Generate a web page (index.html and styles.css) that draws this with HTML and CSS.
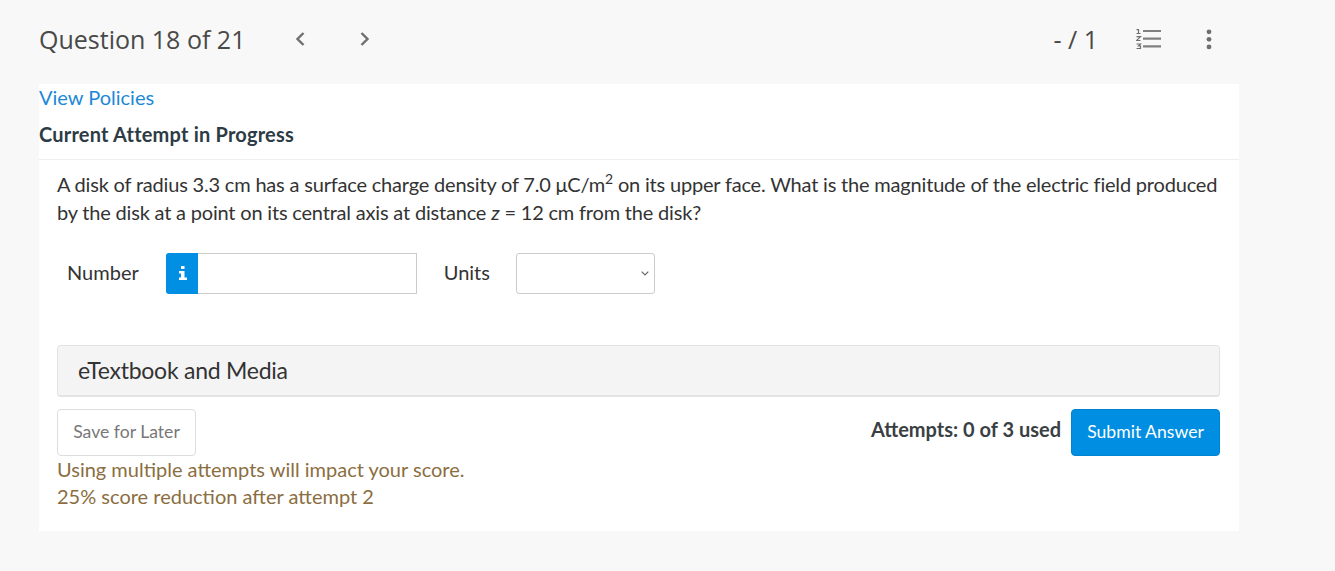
FILE: index.html
```html
<!DOCTYPE html>
<html lang="en">
<head>
    <meta charset="utf-8">
    <title>Question 18 of 21</title>
    <link rel="stylesheet" href="styles.css">
</head>

<body>
    <main class="page">
        <header class="top-bar">
            <h1 class="question-title">Question 18 of 21</h1>
            <nav class="pager">
                <svg class="pager-icon" viewBox="0 0 10 14" width="10" height="14"><path d="M8.500 1 L2.500 7 L8.500 13"/></svg>
                <svg class="pager-icon" viewBox="0 0 10 14" width="10" height="14"><path d="M1.500 1 L7.500 7 L1.500 13"/></svg>
            </nav>
            <div class="top-tools">
                <span class="score">- / 1</span>
                <svg class="list-icon" viewBox="0 0 25 20" width="25" height="20">
                    <path class="list-num" d="M0.500 0.600 H2.500 V4.500 M0.500 4.500 H4.500 M0.500 7.600 H4.500 L0.500 11.500 H4.500 M0.500 15 H4.500 L2.500 17 H4.500 V19.500 H0.500"/>
                    <path class="list-line" d="M7 2 H25 M7 9.700 H25 M7 17.300 H25"/>
                </svg>
                <svg class="dots-icon" viewBox="0 0 6 21" width="6" height="21">
                    <circle cx="3" cy="2.800" r="2.400"/>
                    <circle cx="3" cy="10.300" r="2.400"/>
                    <circle cx="3" cy="17.900" r="2.400"/>
                </svg>
            </div>
        </header>

        <section class="panel">
            <div class="panel-head">
                <a class="policies" href="#">View Policies</a>
                <h2 class="attempt-title">Current Attempt in Progress</h2>
            </div>
            <div class="panel-body">
                <p class="question">A disk of radius 3.3 cm has a surface charge density of 7.0 μC/m<sup>2</sup> on its upper face. What is the magnitude of the electric field produced by the disk at a point on its central axis at distance <em>z</em> = 12 cm from the disk?</p>

                <div class="answer-row">
                    <label class="answer-label">Number</label>
                    <div class="number-group">
                        <span class="info-box">
                            <svg viewBox="0 0 8 14" width="8" height="14"><path d="M2 0 H5.500 V3 H2 Z M0 5 H5.500 V11.500 H8 V14 H0 V11.500 H2 V7.500 H0 Z"/></svg>
                        </span>
                        <input class="number-input" type="text">
                    </div>
                    <label class="answer-label units-label">Units</label>
                    <div class="units-select">
                        <svg viewBox="0 0 8 5" width="8" height="5"><path d="M0.700 0.700 L4 4 L7.300 0.700"/></svg>
                    </div>
                </div>

                <div class="media-bar">eTextbook and Media</div>

                <div class="actions">
                    <button class="btn-save">Save for Later</button>
                    <div class="submit-side">
                        <span class="attempts">Attempts: 0 of 3 used</span>
                        <button class="btn-submit">Submit Answer</button>
                    </div>
                </div>

                <p class="warning">Using multiple attempts will impact your score.<br>25% score reduction after attempt 2</p>
            </div>
        </section>
    </main>
</body>

</html>
```

FILE: styles.css
```css
html,
body {
    margin: 0;
    padding: 0;
    height: 100%;
}

body {
    background-color: #f8f8f8;
    font-family: Lato, "Open Sans", sans-serif;
    color: #2d3b45;
    overflow: hidden;
}

.page {
    width: 1200px;
    margin-left: 39px;
}

.top-bar {
    display: flex;
    align-items: center;
    height: 84px;
    padding-bottom: 6px;
    box-sizing: border-box;
}

.question-title {
    margin: 0;
    font-family: "Open Sans", sans-serif;
    font-size: 25px;
    font-weight: 400;
    color: #494949;
}

.pager {
    display: flex;
    gap: 55px;
    margin-left: 50px;
}

.pager-icon path {
    fill: none;
    stroke: #6f6f6f;
    stroke-width: 2.400;
}

.top-tools {
    display: flex;
    align-items: center;
    margin-left: auto;
    margin-right: 27px;
}

.score {
    font-family: "Open Sans", sans-serif;
    font-size: 25px;
    color: #494949;
    margin-right: 38px;
}

.list-icon {
    margin-right: 45px;
}

.list-num {
    fill: none;
    stroke: #6f6f6f;
    stroke-width: 1.200;
}

.list-line {
    fill: none;
    stroke: #808080;
    stroke-width: 2.200;
}

.dots-icon circle {
    fill: #6f6f6f;
}

.panel {
    background-color: #fff;
    height: 447px;
}

.panel-head {
    border-bottom: 1px solid #eee;
    height: 75px;
}

.policies {
    display: block;
    padding-top: 1px;
    font-size: 20px;
    line-height: 24px;
    color: #1e88d8;
    text-decoration: none;
}

.attempt-title {
    margin: 13px 0 0;
    font-size: 20px;
    line-height: 24px;
    font-weight: 700;
    letter-spacing: 0.2px;
    color: #2d3b45;
}

.panel-body {
    padding: 10px 19px 0 18px;
}

.question {
    margin: 0;
    font-size: 20px;
    line-height: 28px;
    letter-spacing: -0.19px;
    color: #333;
}

.question sup {
    font-size: 14px;
    line-height: 0;
}

.answer-row {
    display: flex;
    align-items: center;
    height: 41px;
    margin-top: 27px;
    padding-left: 10px;
}

.answer-label {
    padding-bottom: 3px;
    font-size: 20px;
    color: #333;
}

.number-group {
    display: flex;
    margin-left: 27px;
    height: 41px;
}

.info-box {
    display: flex;
    align-items: center;
    justify-content: center;
    width: 32px;
    padding: 0 0 2px 3px;
    box-sizing: border-box;
    background-color: #008fe3;
    border-radius: 3px 0 0 3px;
}

.info-box path {
    fill: #fff;
}

.number-input {
    box-sizing: border-box;
    width: 219px;
    height: 41px;
    padding: 0 8px;
    border: 1px solid #ccc;
    border-left: 0;
    outline: 0;
}

.units-label {
    margin-left: 27px;
}

.units-select {
    box-sizing: border-box;
    display: flex;
    align-items: center;
    justify-content: flex-end;
    width: 139px;
    height: 41px;
    margin-left: 26px;
    padding-right: 5px;
    border: 1px solid #ccc;
    border-radius: 3px;
}

.units-select path {
    fill: none;
    stroke: #666;
    stroke-width: 1.200;
}

.media-bar {
    box-sizing: border-box;
    height: 52px;
    margin-top: 51px;
    padding-left: 20px;
    background-color: #f4f4f4;
    border: 1px solid #e3e3e3;
    border-bottom-width: 2px;
    border-radius: 4px;
    font-size: 23px;
    letter-spacing: -0.25px;
    line-height: 49px;
    color: #333;
}

.actions {
    display: flex;
    justify-content: space-between;
    margin-top: 12px;
}

.btn-save,
.btn-submit {
    box-sizing: border-box;
    height: 47px;
    padding: 0 0 3px;
    border-radius: 4px;
    font-family: Lato, sans-serif;
    font-size: 17.600px;
    white-space: nowrap;
}

.btn-save {
    width: 139px;
    background-color: #fff;
    border: 1px solid #ddd;
    color: #777;
}

.btn-submit {
    width: 149px;
    background-color: #008ee2;
    border: 1px solid #0084d2;
    color: #fff;
}

.submit-side {
    display: flex;
    gap: 10px;
}

.attempts {
    padding-top: 8px;
    font-size: 20px;
    font-weight: 700;
    color: #3a3f44;
}

.warning {
    margin: 0;
    font-size: 20px;
    line-height: 27px;
    color: #8b6e3f;
}
```
